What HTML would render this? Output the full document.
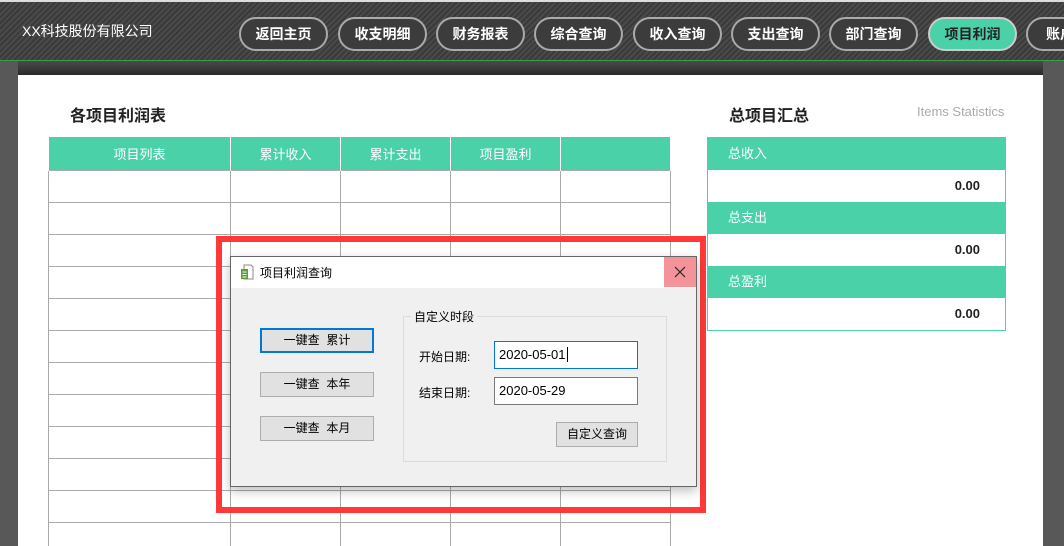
<!DOCTYPE html>
<html><head><meta charset="utf-8"><style>
*{margin:0;padding:0;box-sizing:border-box}
html,body{width:1064px;height:546px;overflow:hidden}
body{position:relative;background:#585858;font-family:"Liberation Sans","Noto Sans CJK SC",sans-serif}
.hdr{position:absolute;left:0;top:0;width:1064px;height:61px;background:repeating-linear-gradient(135deg,#4a4a4a 0 2px,#3a3a3a 2px 4px);border-top:2px solid #ddd;border-bottom:1px solid #3c9a4a}
.logo{position:absolute;left:22px;top:19px;color:#fff;font-size:14px}
.nb{position:absolute;top:15px;width:89px;height:34px;border-radius:17px;border:2px solid #aaa;background:#3c3c3c;color:#fff;font-size:14px;font-weight:bold;text-align:center;line-height:30px}
.nb.on{background:#4bd1a8;color:#222;border-color:#ccc}
.bar{position:absolute;left:18px;top:61px;width:1025px;height:14px;background:linear-gradient(#4a4a4a,#2a2a2a)}
.main{position:absolute;left:18px;top:75px;width:1025px;height:471px;background:#fff}
.t{position:absolute;font-size:16px;font-weight:bold;color:#222}
table{position:absolute;border-collapse:collapse}
.tb td{border:1px solid #aaa;height:32px;padding:0}
.tb th{background:#4bd1a8;color:#fff;font-weight:normal;font-size:13px;height:33px;border-left:1px solid #fff;border-right:1px solid #fff;padding:0}
.sum{position:absolute;left:707px;top:137px;width:299px;border:1px solid #4bd1a8}
.sum .g{background:#4bd1a8;color:#fff;font-size:13px;height:32px;line-height:32px;padding-left:20px}
.sum .w{height:32px;line-height:32px;text-align:right;padding-right:25px;font-weight:bold;font-size:13px;color:#222}
.red{position:absolute;left:216px;top:236px;width:490px;height:277px;border:6px solid #ff3838}
.dlg{position:absolute;left:230px;top:256px;width:467px;height:231px;background:#f0f0f0;border:1px solid #666;box-shadow:0 4px 10px rgba(0,0,0,.25);font-size:12px;color:#000}
.tt{height:31px;background:#fff;position:relative}
.cl{position:absolute;right:0;top:0;width:32px;height:30px;background:#f4939a}
.b{position:absolute;width:114px;height:25px;background:#e1e1e1;border:1px solid #adadad;text-align:center;line-height:23px}
.in{position:absolute;left:263px;width:144px;height:28px;background:#fff;border:1px solid #7a7a7a;padding-left:4px;line-height:26px;font-size:13px}
</style></head><body>
<div class="hdr"><div class="logo">XX科技股份有限公司</div>
<div class="nb" style="left:239px">返回主页</div>
<div class="nb" style="left:338px">收支明细</div>
<div class="nb" style="left:436px">财务报表</div>
<div class="nb" style="left:534px">综合查询</div>
<div class="nb" style="left:633px">收入查询</div>
<div class="nb" style="left:731px">支出查询</div>
<div class="nb" style="left:829px">部门查询</div>
<div class="nb on" style="left:928px">项目利润</div>
<div class="nb" style="left:1026px;text-align:left;padding-left:18px">账户</div>
</div>
<div class="bar"></div>
<div class="main"></div>
<div class="t" style="left:70px;top:102px">各项目利润表</div>
<div class="t" style="left:729px;top:102px">总项目汇总</div>
<div style="position:absolute;left:917px;top:104px;font-size:13px;color:#aaa">Items Statistics</div>
<table class="tb" style="left:48px;top:137px;width:623px">
<tr><th style="width:182px">项目列表</th><th style="width:110px">累计收入</th><th style="width:110px">累计支出</th><th style="width:110px">项目盈利</th><th></th></tr>
<tr><td></td><td></td><td></td><td></td><td></td></tr>
<tr><td></td><td></td><td></td><td></td><td></td></tr>
<tr><td></td><td></td><td></td><td></td><td></td></tr>
<tr><td></td><td></td><td></td><td></td><td></td></tr>
<tr><td></td><td></td><td></td><td></td><td></td></tr>
<tr><td></td><td></td><td></td><td></td><td></td></tr>
<tr><td></td><td></td><td></td><td></td><td></td></tr>
<tr><td></td><td></td><td></td><td></td><td></td></tr>
<tr><td></td><td></td><td></td><td></td><td></td></tr>
<tr><td></td><td></td><td></td><td></td><td></td></tr>
<tr><td></td><td></td><td></td><td></td><td></td></tr>
<tr><td></td><td></td><td></td><td></td><td></td></tr>
</table>
<div class="sum"><div class="g">总收入</div><div class="w">0.00</div><div class="g">总支出</div><div class="w">0.00</div><div class="g">总盈利</div><div class="w">0.00</div></div>
<div class="red"></div>
<div class="dlg">
<div class="tt"><svg style="position:absolute;left:9px;top:7px" width="14" height="16" viewBox="0 0 14 16"><path d="M4 1h7l2 2v12H4z" fill="#fff" stroke="#888"/><rect x="1" y="5" width="7" height="10" fill="#5a9e3a"/><path d="M2.5 8h4M2.5 10.5h4M2.5 13h4M6 4h5M9 7h3M9 10h3" stroke="#fff" stroke-width="1"/></svg><span style="position:absolute;left:29px;top:7px">项目利润查询</span><div class="cl"><svg width="32" height="30" viewBox="0 0 32 30"><path d="M11 10l10 10M21 10l-10 10" stroke="#222" stroke-width="1.2"/></svg></div></div>
<div class="b" style="left:29px;top:71px;border:2px solid #0078d7;line-height:21px">一键查&nbsp;&nbsp;累计</div>
<div class="b" style="left:29px;top:115px">一键查&nbsp;&nbsp;本年</div>
<div class="b" style="left:29px;top:159px">一键查&nbsp;&nbsp;本月</div>
<div style="position:absolute;left:172px;top:59px;width:264px;height:146px;border:1px solid #dcdcdc"></div>
<div style="position:absolute;left:180px;top:51px;background:#f0f0f0;padding:0 3px">自定义时段</div>
<div style="position:absolute;left:188px;top:91px">开始日期:</div>
<div style="position:absolute;left:188px;top:127px">结束日期:</div>
<div class="in" style="top:84px;border-color:#0078d7">2020-05-01<span style="border-left:1px solid #000;margin-left:1px"></span></div>
<div class="in" style="top:120px">2020-05-29</div>
<div class="b" style="left:325px;top:165px;width:82px">自定义查询</div>
</div>
</body></html>
